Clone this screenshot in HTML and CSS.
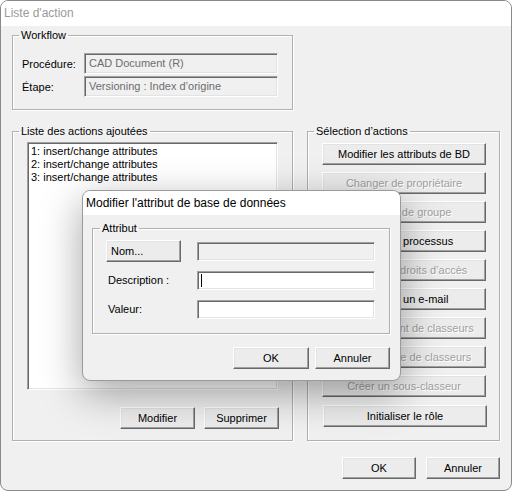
FILE: index.html
```html
<!DOCTYPE html>
<html lang="fr">
<head>
  <meta charset="UTF-8" />
  <title>Liste d'action</title>
  <link rel="stylesheet" href="styles.css">
</head>
<body>

  <div class="window">
    <div class="titlebar">Liste d'action</div>

    <div class="client">
      <fieldset class="group workflow">
        <legend>Workflow</legend>
        <div class="group-body">
          <div class="field-row">
            <label>Procédure:</label>
            <div class="edit disabled">CAD Document (R)</div>
          </div>
          <div class="field-row">
            <label>Étape:</label>
            <div class="edit disabled">Versioning : Index d’origine</div>
          </div>
        </div>
      </fieldset>

      <div class="columns">
        <fieldset class="group actions">
          <legend>Liste des actions ajoutées</legend>
          <div class="group-body">
            <div class="listbox">
              <div class="list-item">1: insert/change attributes</div>
              <div class="list-item">2: insert/change attributes</div>
              <div class="list-item">3: insert/change attributes</div>
            </div>
            <div class="button-row">
              <button class="btn">Modifier</button>
              <button class="btn">Supprimer</button>
            </div>
          </div>
        </fieldset>

        <fieldset class="group selection">
          <legend>Sélection d’actions</legend>
          <div class="group-body">
            <button class="btn wide">Modifier les attributs de BD</button>
            <button class="btn wide" disabled>Changer de propriétaire</button>
            <button class="btn wide" disabled>Changer de groupe</button>
            <button class="btn wide">Lancer le processus</button>
            <button class="btn wide" disabled>Modifier les droits d’accès</button>
            <button class="btn wide">Envoyer un e-mail</button>
            <button class="btn wide" disabled>Enregistrement de classeurs</button>
            <button class="btn wide" disabled>Copie multiple de classeurs</button>
            <button class="btn wide" disabled>Créer un sous-classeur</button>
            <button class="btn wide focused">Initialiser le rôle</button>
          </div>
        </fieldset>
      </div>

      <div class="button-row footer">
        <button class="btn">OK</button>
        <button class="btn">Annuler</button>
      </div>
    </div>

    <!-- modal dialog on top of the main window -->
    <div class="modal">
      <div class="modal-title">Modifier l'attribut de base de données</div>
      <div class="modal-body">
        <fieldset class="group attribut">
          <legend>Attribut</legend>
          <div class="group-body">
            <div class="attr-row">
              <div class="attr-label"><button class="btn name-btn">Nom...</button></div>
              <div class="edit small disabled"></div>
            </div>
            <div class="attr-row">
              <div class="attr-label"><span class="label-text">Description :</span></div>
              <div class="edit small"><span class="caret"></span></div>
            </div>
            <div class="attr-row">
              <div class="attr-label"><span class="label-text">Valeur:</span></div>
              <div class="edit small"></div>
            </div>
          </div>
        </fieldset>
        <div class="button-row modal-buttons">
          <button class="btn ok">OK</button>
          <button class="btn">Annuler</button>
        </div>
      </div>
    </div>
  </div>

</body>
</html>
```

FILE: styles.css
```css
body {
  margin: 0;
  background: #ffffff;
  font-family: "Liberation Sans", Arial, sans-serif;
  font-size: 11px;
  color: #000;
}

.window {
  position: relative;
  box-sizing: border-box;
  width: 512px;
  height: 491px;
  border: 1px solid #8a8a8a;
  border-radius: 8px;
  background: #f0f0f0;
  overflow: hidden;
}

.titlebar {
  height: 25px;
  background: #fff;
  color: #9a9a9a;
  font-size: 12px;
  line-height: 25px;
  padding-left: 3px;
}

.client {
  padding: 3px 11px 0 11px;
}

/* group boxes */
.group {
  box-sizing: border-box;
  margin: 0;
  padding: 0;
  border: 1px solid #b0b0b0;
  box-shadow: inset 1px 1px #fff, 1px 1px #fff;
  min-width: 0;
}

.group legend {
  margin-left: 6px;
  padding: 0 2px;
  line-height: 13px;
  font-size: 11px;
}

.workflow {
  width: 281px;
}

.workflow .group-body {
  padding: 11px 0 12px 9px;
}

.field-row {
  display: flex;
  align-items: center;
  height: 21px;
}

.field-row + .field-row {
  margin-top: 2px;
}

.field-row label {
  width: 62px;
  flex: none;
}

.edit {
  box-sizing: border-box;
  width: 194px;
  height: 21px;
  border: 1px solid;
  border-color: #a0a0a0 #fff #fff #a0a0a0;
  box-shadow: inset 1px 1px #696969, inset -1px -1px #e3e3e3;
  background: #fff;
  padding: 0 4px;
  line-height: 19px;
  white-space: nowrap;
  overflow: hidden;
}

.edit.disabled {
  background: #f0f0f0;
  color: #6d6d6d;
}

.columns {
  display: flex;
  gap: 14px;
  margin-top: 15px;
}

.actions {
  width: 281px;
}

.actions .group-body {
  padding: 4px 13px 10px 14px;
}

.listbox {
  box-sizing: border-box;
  width: 251px;
  height: 248px;
  background: #fff;
  border: 1px solid;
  border-color: #a0a0a0 #fff #fff #a0a0a0;
  box-shadow: inset 1px 1px #696969, inset -1px -1px #e3e3e3;
  padding: 2px 3px;
}

.list-item {
  line-height: 13px;
}

.button-row {
  display: flex;
  justify-content: flex-end;
  gap: 9px;
  margin-top: 17px;
}

.btn {
  box-sizing: border-box;
  width: 75px;
  height: 22px;
  padding: 0;
  margin: 0;
  font-family: inherit;
  font-size: 11px;
  color: #000;
  background: #ececec;
  border: 1px solid;
  border-color: #fff #696969 #696969 #fff;
  box-shadow: inset -1px -1px #a0a0a0, inset 1px 1px #e3e3e3;
  border-radius: 0;
  white-space: nowrap;
}

.btn:disabled {
  color: #a0a0a0;
  text-shadow: 1px 1px #fff;
}

.selection {
  width: 193px;
}

.selection .group-body {
  padding: 5px 13px 13px 14px;
  display: flex;
  flex-direction: column;
  gap: 7px;
}

.btn.wide {
  width: 164px;
}

.btn.focused {
  margin: 1px 0 0 1px;
}

.footer {
  margin-top: 16px;
  gap: 10px;
}

.footer .btn {
  width: 74px;
}

/* modal dialog */
.modal {
  position: absolute;
  left: 81px;
  top: 189px;
  box-sizing: border-box;
  width: 319px;
  height: 191px;
  border: 1px solid #9a9a9a;
  border-radius: 8px;
  background: #f0f0f0;
  box-shadow: 0 12px 40px rgba(0, 0, 0, 0.36);
  overflow: hidden;
}

.modal-title {
  height: 24px;
  background: #fff;
  font-size: 12px;
  line-height: 24px;
  padding-left: 3px;
}

.modal-body {
  padding: 7px 10px 10px 9px;
}

.attribut {
  width: 298px;
}

.attribut legend {
  margin-left: 7px;
}

.attribut .group-body {
  padding: 5px 14px 13px 13px;
}

.attr-row {
  display: flex;
  align-items: center;
  height: 22px;
}

.attr-row + .attr-row {
  margin-top: 7px;
}

.attr-label {
  width: 91px;
  flex: none;
}

.label-text {
  padding-left: 2px;
}

.btn.name-btn {
  text-align: left;
  padding-left: 4px;
}

.edit.small {
  width: 178px;
  height: 19px;
  line-height: 17px;
  padding: 0 3px;
}

.caret {
  display: inline-block;
  width: 1px;
  height: 13px;
  background: #000;
  vertical-align: middle;
}

.modal-buttons {
  margin-top: 13px;
  gap: 6px;
}

.modal-buttons .ok {
  width: 76px;
}
```
